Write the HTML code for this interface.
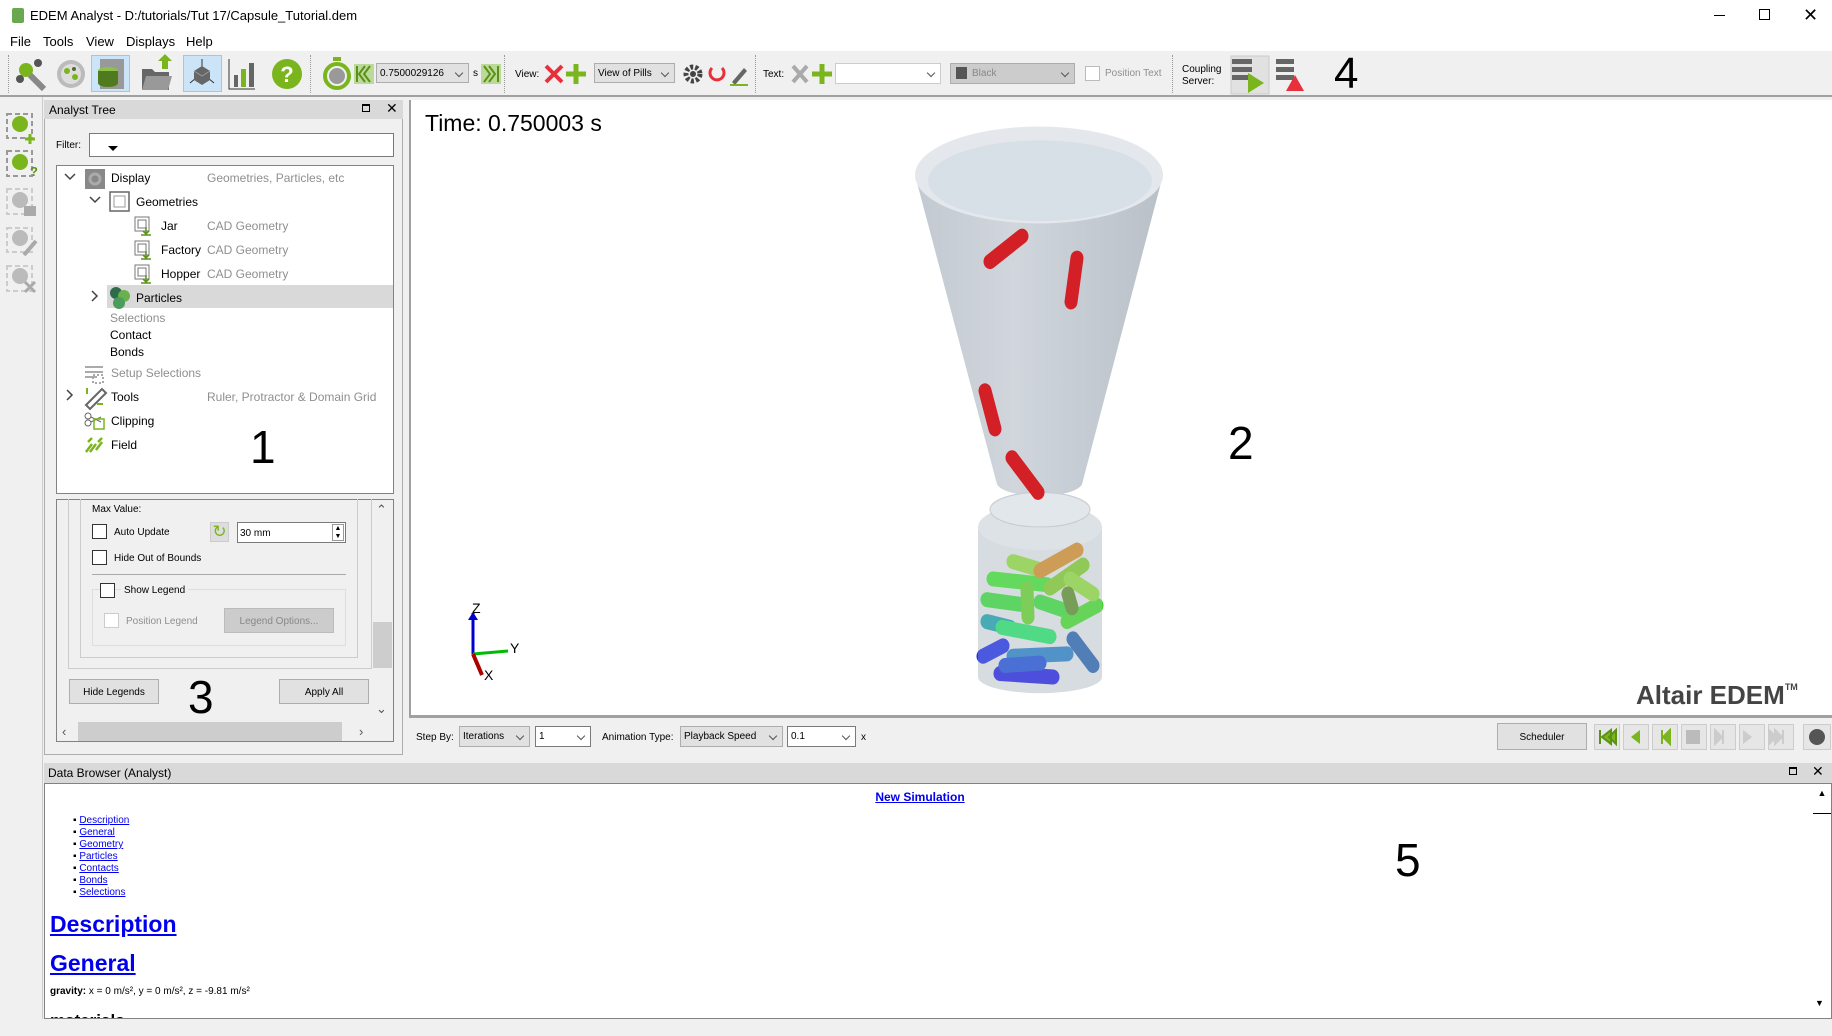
<!DOCTYPE html>
<html><head><meta charset="utf-8"><style>
*{box-sizing:border-box;margin:0;padding:0}
body{width:1832px;height:1036px;overflow:hidden;background:#f0f0f0;font-family:"Liberation Sans",sans-serif;font-size:12px;color:#000;position:relative}
.a{position:absolute}
.t{position:absolute;white-space:nowrap;line-height:1}
.g{color:#8f8f8f}
.cb{position:absolute;width:15px;height:15px;border:1px solid #333;background:#fff}
.btn{position:absolute;border:1px solid #adadad;background:#e1e1e1;text-align:center;font-size:11px}
.combo{position:absolute;border:1px solid #adadad;background:#e1e1e1;font-size:10px;padding:4px 3px;white-space:nowrap}
.combo.w{background:#fff;border-color:#7a7a7a}
.combo:after{content:"";position:absolute;right:6px;top:6px;width:5px;height:5px;border-right:1px solid #555;border-bottom:1px solid #555;transform:rotate(45deg)}
.sep{position:absolute;top:55px;height:38px;border-left:1px dotted #999}
.pb{position:absolute;top:724px;width:26px;height:26px;border:1px solid #ccc;background:#e6e6e6}
a{color:#00e;text-decoration:underline}
</style></head><body>
<div class="a" style="left:0;top:0;width:1832px;height:32px;background:#fff"></div>
<div class="a" style="left:12px;top:8px;width:12px;height:15px;background:#6aa84f;border-radius:2px"></div>
<div class="t" style="left:30px;top:9px;font-size:13px">EDEM Analyst - D:/tutorials/Tut 17/Capsule_Tutorial.dem</div>
<div class="a" style="left:1714px;top:15px;width:11px;height:1px;background:#000"></div>
<div class="a" style="left:1759px;top:9px;width:11px;height:11px;border:1px solid #000"></div>
<div class="t" style="left:1803px;top:6px;font-size:18px">✕</div>
<div class="a" style="left:0;top:32px;width:1832px;height:19px;background:#fff"></div>
<div class="t" style="left:10px;top:35px;font-size:13px">File</div>
<div class="t" style="left:43px;top:35px;font-size:13px">Tools</div>
<div class="t" style="left:86px;top:35px;font-size:13px">View</div>
<div class="t" style="left:126px;top:35px;font-size:13px">Displays</div>
<div class="t" style="left:186px;top:35px;font-size:13px">Help</div>
<div class="a" style="left:0;top:51px;width:1832px;height:46px;background:#f0f0f0;border-bottom:2px solid #a0a0a0"></div>
<div class="a" style="left:91px;top:55px;width:39px;height:37px;background:#cce4f7;border:1px solid #99c9ef"></div>
<div class="a" style="left:183px;top:55px;width:39px;height:37px;background:#cce4f7;border:1px solid #99c9ef"></div>
<svg class="a" style="left:0;top:51px" width="1832" height="46">
<circle cx="26" cy="19" r="7" fill="#7ab51d"/><circle cx="38" cy="12" r="4" fill="#555"/><circle cx="20" cy="28" r="4" fill="#555"/><path d="M30 24 L44 38" stroke="#888" stroke-width="6"/>
<circle cx="71" cy="23" r="14" fill="#bbb"/><circle cx="71" cy="23" r="10" fill="#ddd"/><circle cx="67" cy="20" r="3" fill="#7ab51d"/><circle cx="75" cy="26" r="3" fill="#7ab51d"/><circle cx="74" cy="18" r="2" fill="#556b2f"/>
<rect x="100" y="8" width="24" height="30" fill="#999"/><ellipse cx="108" cy="20" rx="10" ry="4" fill="#8bc34a"/><rect x="98" y="20" width="20" height="12" fill="#4f7a1e"/><ellipse cx="108" cy="32" rx="10" ry="4" fill="#4f7a1e"/>
<path d="M142 18 h10 l3 3 h14 v18 h-27z" fill="#666"/><path d="M146 25 h26 l-4 14 h-26z" fill="#999"/><path d="M162 18 v-8 h-4 l7-7 7 7 h-4 v8z" fill="#7ab51d"/>
<path d="M202 8 v14 M202 22 l-12 10 M202 22 l12 10" stroke="#333"/><path d="M194 20 l8-5 8 5 v9 l-8 5 -8-5z" fill="#666"/><path d="M194 20 l8 5 8-5" stroke="#999" fill="none"/>
<path d="M229 8 v30 h26" stroke="#333" fill="none"/><rect x="234" y="24" width="4" height="12" fill="#666"/><rect x="241" y="18" width="5" height="18" fill="#7ab51d"/><rect x="249" y="12" width="5" height="24" fill="#666"/>
<circle cx="287" cy="23" r="15" fill="#7ab51d"/><text x="287" y="31" font-size="22" font-weight="bold" fill="#fff" text-anchor="middle" font-family="Liberation Sans">?</text>
<circle cx="337" cy="25" r="12" fill="none" stroke="#7ab51d" stroke-width="4"/><circle cx="337" cy="25" r="8" fill="#999"/><rect x="333" y="6" width="8" height="4" fill="#7ab51d"/>
<rect x="354" y="13" width="20" height="20" fill="#bcd99a"/><path d="M357 15 v16 M370 15 l-6 8 6 8 M365 15 l-6 8 6 8" stroke="#5a9216" stroke-width="2" fill="none"/>
<rect x="481" y="13" width="20" height="20" fill="#bcd99a"/><path d="M498 15 v16 M484 15 l6 8 -6 8 M489 15 l6 8 -6 8" stroke="#5a9216" stroke-width="2" fill="none"/>
<path d="M546 15 l16 16 M562 15 l-16 16" stroke="#e8303c" stroke-width="4"/>
<path d="M576 13 v20 M566 23 h20" stroke="#7ab51d" stroke-width="5"/>
<circle cx="693" cy="23" r="7" fill="none" stroke="#444" stroke-width="5" stroke-dasharray="3 2"/><circle cx="693" cy="23" r="3" fill="#444"/>
<path d="M722 17 a7 7 0 1 1 -10 0" stroke="#e8303c" stroke-width="3" fill="none"/>
<path d="M732 31 l12-14 3 3 -12 14z" fill="#666"/><path d="M730 34 h18" stroke="#7ab51d" stroke-width="2"/>
<path d="M793 15 l14 16 M807 15 l-14 16" stroke="#aaa" stroke-width="4"/>
<path d="M822 13 v20 M812 23 h20" stroke="#7ab51d" stroke-width="5"/>
<rect x="1231" y="5" width="38" height="38" fill="#e1e1e1" stroke="#ccc"/>
<rect x="1232" y="8" width="20" height="5" fill="#666"/><rect x="1232" y="16" width="20" height="5" fill="#666"/><rect x="1232" y="24" width="20" height="5" fill="#666"/><path d="M1248 22 l16 10 -16 10z" fill="#7ab51d"/>
<rect x="1276" y="8" width="18" height="5" fill="#666"/><rect x="1276" y="16" width="18" height="5" fill="#666"/><rect x="1276" y="24" width="18" height="5" fill="#666"/><path d="M1295 24 l9 16 h-18z" fill="#e8303c"/>
</svg>
<div class="sep" style="left:310px"></div><div class="sep" style="left:504px"></div><div class="sep" style="left:755px"></div><div class="sep" style="left:1172px"></div>
<div class="sep" style="left:8px"></div>
<div class="combo" style="left:376px;top:63px;width:93px;height:20px">0.7500029126</div>
<div class="t" style="left:473px;top:69px;font-size:10px">s</div>
<div class="t" style="left:515px;top:70px;font-size:10px">View:</div>
<div class="combo" style="left:594px;top:63px;width:81px;height:20px">View of Pills</div>
<div class="t" style="left:763px;top:70px;font-size:10px">Text:</div>
<div class="combo w" style="left:835px;top:63px;width:106px;height:21px;border-color:#ccc"></div>
<div class="combo" style="left:950px;top:63px;width:125px;height:21px;color:#888;background:#ccc;padding-left:21px">Black</div>
<div class="a" style="left:956px;top:67px;width:11px;height:12px;background:#555"></div>
<div class="a" style="left:1085px;top:66px;width:15px;height:15px;border:1px solid #bbb;background:#fff"></div>
<div class="t g" style="left:1105px;top:69px;font-size:10px">Position Text</div>
<div class="t" style="left:1182px;top:64px;font-size:10px;line-height:12px">Coupling<br>Server:</div>
<div class="t" style="left:1334px;top:52px;font-size:44px">4</div>
<div class="a" style="left:0;top:97px;width:43px;height:922px;background:#f0f0f0;border-right:1px solid #ccc"></div>
<svg class="a" style="left:0;top:100px" width="43" height="200">
<g fill="none" stroke="#999" stroke-width="2" stroke-dasharray="5 3"><rect x="7" y="14" width="25" height="24"/><rect x="7" y="51" width="25" height="25"/><rect x="7" y="89" width="25" height="25" stroke="#ccc"/><rect x="7" y="128" width="25" height="24" stroke="#ccc"/><rect x="7" y="166" width="25" height="25" stroke="#ccc"/></g>
<circle cx="20" cy="24" r="8" fill="#7ab51d"/><path d="M30 34 v10 M25 39 h10" stroke="#7ab51d" stroke-width="3"/>
<circle cx="20" cy="62" r="8" fill="#7ab51d"/><text x="30" y="76" font-size="13" font-weight="bold" fill="#5a9216">?</text>
<circle cx="20" cy="100" r="8" fill="#bbb"/><rect x="24" y="106" width="12" height="10" fill="#aaa"/>
<circle cx="20" cy="138" r="8" fill="#bbb"/><path d="M24 155 l12-14" stroke="#aaa" stroke-width="4"/>
<circle cx="20" cy="176" r="8" fill="#bbb"/><path d="M25 182 l10 10 M35 182 l-10 10" stroke="#aaa" stroke-width="3"/>
</svg>
<div class="a" style="left:44px;top:100px;width:359px;height:19px;background:#d9d9d9"></div>
<div class="t" style="left:49px;top:104px;font-size:12px">Analyst Tree</div>
<div class="a" style="left:362px;top:104px;width:8px;height:8px;border:1px solid #000;border-top-width:2px"></div>
<div class="t" style="left:386px;top:101px;font-size:14px">✕</div>
<div class="a" style="left:44px;top:119px;width:359px;height:636px;border:1px solid #adadad;border-top:none"></div>
<div class="t" style="left:56px;top:141px;font-size:10px">Filter:</div>
<div class="a" style="left:89px;top:133px;width:305px;height:24px;background:#fff;border:1px solid #7a7a7a"></div>
<div class="a" style="left:108px;top:146px;width:0;height:0;border:5px solid transparent;border-top:5px solid #000"></div>
<div class="a" style="left:56px;top:165px;width:338px;height:329px;background:#fff;border:1px solid #828282"></div>
<div class="a" style="left:107px;top:285px;width:286px;height:23px;background:#d9d9d9"></div>
<svg class="a" style="left:56px;top:165px" width="338" height="329">
<path d="M9 9 l5 5 5-5 M34 32 l5 5 5-5 M36 126 l5 5 -5 5 M11 225 l5 5 -5 5" stroke="#444" stroke-width="1.5" fill="none"/>
<rect x="29" y="4" width="20" height="20" fill="#888"/><circle cx="39" cy="14" r="5" fill="none" stroke="#aaa" stroke-width="3"/>
<rect x="54" y="27" width="19" height="19" fill="none" stroke="#666" stroke-width="1.5"/><rect x="58" y="31" width="11" height="11" fill="none" stroke="#999"/>
<g fill="none" stroke="#777"><rect x="79" y="52" width="14" height="14"/><rect x="82" y="55" width="8" height="8"/><rect x="79" y="76" width="14" height="14"/><rect x="82" y="79" width="8" height="8"/><rect x="79" y="100" width="14" height="14"/><rect x="82" y="103" width="8" height="8"/></g>
<path d="M90 62 v6 M87 66 l3 3 3-3 M85 70 h10 M90 86 v6 M87 90 l3 3 3-3 M85 94 h10 M90 110 v6 M87 114 l3 3 3-3 M85 118 h10" stroke="#5a9216" stroke-width="1.5" fill="none"/>
<circle cx="60" cy="128" r="6" fill="#2e6b4a"/><circle cx="68" cy="131" r="6" fill="#6ab04c"/><circle cx="63" cy="138" r="6" fill="#4c9c5e"/>
<g stroke="#aaa" stroke-width="2"><path d="M29 202 h18 M29 207 h18 M29 212 h12"/><rect x="37" y="210" width="10" height="8" fill="none" stroke-dasharray="2 2"/></g>
<path d="M30 240 l16-16 4 4 -16 16z" fill="none" stroke="#666" stroke-width="2"/><path d="M31 223 v6 M47 239 h-6" stroke="#7ab51d" stroke-width="2"/>
<circle cx="32" cy="251" r="3" fill="none" stroke="#666"/><circle cx="32" cy="258" r="3" fill="none" stroke="#666"/><path d="M35 252 l10 5 M35 257 l10-5" stroke="#666"/><rect x="38" y="254" width="10" height="10" fill="none" stroke="#7ab51d" stroke-width="1.5"/>
<path d="M30 287 l6-8 M34 287 l6-8 M40 285 l6-8 M32 277 l4-4 M42 277 l4-4" stroke="#7ab51d" stroke-width="2.5"/>
</svg>
<div class="t" style="left:111px;top:172px;font-size:12px">Display</div><div class="t g" style="left:207px;top:172px;font-size:12px">Geometries, Particles, etc</div>
<div class="t" style="left:136px;top:196px;font-size:12px">Geometries</div>
<div class="t" style="left:161px;top:220px;font-size:12px">Jar</div><div class="t g" style="left:207px;top:220px;font-size:12px">CAD Geometry</div>
<div class="t" style="left:161px;top:244px;font-size:12px">Factory</div><div class="t g" style="left:207px;top:244px;font-size:12px">CAD Geometry</div>
<div class="t" style="left:161px;top:268px;font-size:12px">Hopper</div><div class="t g" style="left:207px;top:268px;font-size:12px">CAD Geometry</div>
<div class="t" style="left:136px;top:292px;font-size:12px">Particles</div>
<div class="t g" style="left:110px;top:312px;font-size:12px">Selections</div>
<div class="t" style="left:110px;top:329px;font-size:12px">Contact</div>
<div class="t" style="left:110px;top:346px;font-size:12px">Bonds</div>
<div class="t g" style="left:111px;top:367px;font-size:12px">Setup Selections</div>
<div class="t" style="left:111px;top:391px;font-size:12px">Tools</div><div class="t g" style="left:207px;top:391px;font-size:12px">Ruler, Protractor &amp; Domain Grid</div>
<div class="t" style="left:111px;top:415px;font-size:12px">Clipping</div>
<div class="t" style="left:111px;top:439px;font-size:12px">Field</div>
<div class="t" style="left:250px;top:424px;font-size:46px">1</div>
<div class="a" style="left:56px;top:499px;width:338px;height:243px;border:1px solid #828282"></div>
<div class="a" style="left:68px;top:499px;width:304px;height:170px;border:1px solid #ccc;border-top:none"></div>
<div class="a" style="left:80px;top:499px;width:278px;height:159px;border:1px solid #ccc;border-top:none"></div>
<div class="a" style="left:373px;top:500px;width:20px;height:221px;background:#f0f0f0"></div>
<div class="a" style="left:373px;top:622px;width:19px;height:46px;background:#cdcdcd"></div>
<div class="t" style="left:376px;top:503px;font-size:13px;color:#555">⌃</div>
<div class="t" style="left:376px;top:702px;font-size:13px;color:#555">⌄</div>
<div class="a" style="left:57px;top:721px;width:336px;height:20px;background:#f0f0f0"></div>
<div class="a" style="left:78px;top:722px;width:264px;height:19px;background:#cdcdcd"></div>
<div class="t" style="left:62px;top:725px;font-size:13px;color:#555">‹</div>
<div class="t" style="left:359px;top:725px;font-size:13px;color:#555">›</div>
<div class="t" style="left:92px;top:505px;font-size:10px">Max Value:</div>
<div class="cb" style="left:92px;top:524px"></div><div class="t" style="left:114px;top:528px;font-size:10px">Auto Update</div>
<div class="a" style="left:210px;top:522px;width:19px;height:20px;background:#ddd;border:1px solid #ccc;color:#7ab51d;font-size:17px;line-height:17px;text-align:center">↻</div>
<div class="a" style="left:237px;top:522px;width:109px;height:21px;background:#fff;border:1px solid #7a7a7a;font-size:10px;padding:5px 2px">30 mm</div>
<div class="a" style="left:332px;top:524px;width:12px;height:17px;border:1px solid #999;font-size:7px;line-height:8px;text-align:center">▲<br>▼</div>
<div class="cb" style="left:92px;top:550px"></div><div class="t" style="left:114px;top:554px;font-size:10px">Hide Out of Bounds</div>
<div class="a" style="left:92px;top:574px;width:254px;height:1px;background:#aaa"></div>
<div class="a" style="left:92px;top:589px;width:254px;height:57px;border:1px solid #ddd"></div>
<div class="cb" style="left:100px;top:583px"></div><div class="t" style="left:121px;top:586px;font-size:10px;background:#f0f0f0;padding:0 3px">Show Legend</div>
<div class="a" style="left:104px;top:613px;width:15px;height:15px;border:1px solid #ccc;background:#fff"></div><div class="t g" style="left:126px;top:617px;font-size:10px">Position Legend</div>
<div class="btn" style="left:224px;top:608px;width:110px;height:25px;background:#ccc;border-color:#bbb;color:#888;padding-top:7px;font-size:10px">Legend Options...</div>
<div class="btn" style="left:69px;top:679px;width:90px;height:25px;padding-top:7px;font-size:10px">Hide Legends</div>
<div class="btn" style="left:279px;top:679px;width:90px;height:25px;padding-top:7px;font-size:10px">Apply All</div>
<div class="t" style="left:188px;top:674px;font-size:46px">3</div>
<div class="a" style="left:409px;top:100px;width:1423px;height:618px;background:#fff;border-left:2px solid #a0a0a0;border-bottom:3px solid #a0a0a0"></div>
<div class="t" style="left:425px;top:112px;font-size:23px">Time: 0.750003 s</div>
<div class="t" style="left:1228px;top:420px;font-size:46px">2</div>
<div class="t" style="left:1636px;top:682px;font-size:26px;font-weight:bold;color:#444">Altair EDEM<sup style="font-size:9px;vertical-align:14px">TM</sup></div>
<svg class="a" style="left:0;top:0" width="1832" height="1036">
<defs><linearGradient id="cg" x1="0" x2="1"><stop offset="0" stop-color="#c3c9d0"/><stop offset=".4" stop-color="#d0d6dc"/><stop offset="1" stop-color="#b9c0c8"/></linearGradient></defs>
<g transform="matrix(1 0 0 1.154 0 -15.4)">
<path d="M915 165 L997 433 A43 12 0 0 0 1082 433 L1163 165 Z" fill="url(#cg)"/>
<ellipse cx="1039" cy="165" rx="124" ry="42" fill="#e4e8ec"/>
<ellipse cx="1040" cy="170" rx="112" ry="35" fill="#d8e0e7"/>
<path d="M978 470 V600 A62 14 0 0 0 1102 600 V470 Z" fill="#d5dade"/>
<ellipse cx="1040" cy="470" rx="62" ry="20" fill="#dde2e7"/>
<ellipse cx="1040" cy="455" rx="50" ry="15" fill="#e2e7eb" stroke="#c6ccd2"/>
<g stroke-linecap="round" stroke-width="13" fill="none">
<path d="M990 240 L1022 218" stroke="#d32027"/><path d="M1077 237 L1071 275" stroke="#d32027"/>
<path d="M985 352 L995 385" stroke="#d32027"/><path d="M1012 410 L1038 440" stroke="#d32027"/>
</g>
<g stroke-linecap="round" stroke-width="13" fill="none">
<path d="M1000 597 L1053 600" stroke="#2424d8"/><path d="M983 582 L1003 573" stroke="#2233dd"/>
<path d="M1013 582 L1067 580" stroke="#2a7cc0"/><path d="M1073 567 L1093 590" stroke="#2a62a8"/>
<path d="M1005 590 L1040 588" stroke="#2050d0"/>
<path d="M987 552 L1010 557" stroke="#1e9aa6"/><path d="M1002 557 L1050 565" stroke="#2ad86a"/>
<path d="M987 533 L1020 537" stroke="#3ad040"/><path d="M1040 535 L1067 543" stroke="#3ad040"/>
<path d="M1067 552 L1097 538" stroke="#44d030"/><path d="M993 515 L1047 520" stroke="#40d838"/>
<path d="M1027 523 L1028 548" stroke="#60c830"/><path d="M1050 523 L1083 503" stroke="#7ac230"/>
<path d="M1070 515 L1093 528" stroke="#8ad040"/><path d="M1013 500 L1040 507" stroke="#8ad040"/>
<path d="M1040 508 L1077 490" stroke="#c88a30"/><path d="M1068 528 L1072 540" stroke="#5a8a30"/>
</g>
<path d="M978 470 V600 A62 14 0 0 0 1102 600 V470 Z" fill="#dfe4e9" opacity=".22"/>
</g>
<path d="M473 654 V613" stroke="#0000cc" stroke-width="3"/><path d="M468 620 l5-8 5 8z" fill="#0000cc"/>
<path d="M473 654 L508 651" stroke="#00bb00" stroke-width="3"/><path d="M473 654 L482 675" stroke="#aa0000" stroke-width="4"/>
<text x="472" y="613" font-size="14" font-family="Liberation Sans">Z</text><text x="510" y="653" font-size="14" font-family="Liberation Sans">Y</text><text x="484" y="680" font-size="14" font-family="Liberation Sans">X</text>
</svg>
<div class="t" style="left:416px;top:733px;font-size:10px">Step By:</div>
<div class="combo" style="left:459px;top:726px;width:71px;height:21px">Iterations</div>
<div class="combo w" style="left:535px;top:726px;width:56px;height:21px">1</div>
<div class="t" style="left:602px;top:733px;font-size:10px">Animation Type:</div>
<div class="combo" style="left:680px;top:726px;width:103px;height:21px">Playback Speed</div>
<div class="combo w" style="left:787px;top:726px;width:69px;height:21px">0.1</div>
<div class="t" style="left:861px;top:733px;font-size:10px">x</div>
<div class="btn" style="left:1497px;top:723px;width:90px;height:27px;padding-top:8px;font-size:10px">Scheduler</div>
<div class="pb" style="left:1594px"></div><div class="pb" style="left:1623px"></div><div class="pb" style="left:1652px"></div><div class="pb" style="left:1681px"></div><div class="pb" style="left:1710px"></div><div class="pb" style="left:1739px"></div><div class="pb" style="left:1768px"></div><div class="pb" style="left:1803px;width:28px"></div>
<svg class="a" style="left:1594px;top:724px" width="238" height="26">
<path d="M6 6 v14 M17 6 l-9 7 9 7z M22 6 l-7 7 7 7z" stroke="#5a9216" fill="#7ab51d" stroke-width="2"/>
<path d="M46 6 l-9 7 9 7z" fill="#7ab51d"/>
<path d="M68 6 v14 M76 6 l-7 7 7 7z" stroke="#7ab51d" fill="#7ab51d" stroke-width="2"/>
<rect x="92" y="6" width="14" height="14" fill="#bbb"/>
<path d="M121 6 l7 7 -7 7z M129 6 v14" stroke="#ccc" fill="#ccc" stroke-width="2"/>
<path d="M149 6 l9 7 -9 7z" fill="#ccc"/>
<path d="M175 6 l7 7 -7 7z M181 6 l7 7 -7 7z M189 6 v14" stroke="#ccc" fill="#ccc" stroke-width="2"/>
<circle cx="223" cy="13" r="8" fill="#555"/>
</svg>
<div class="a" style="left:44px;top:763px;width:1788px;height:20px;background:#d9d9d9"></div>
<div class="t" style="left:48px;top:767px;font-size:12px">Data Browser (Analyst)</div>
<div class="a" style="left:1789px;top:767px;width:8px;height:8px;border:1px solid #000;border-top-width:2px"></div>
<div class="t" style="left:1812px;top:764px;font-size:14px">✕</div>
<div class="a" style="left:44px;top:783px;width:1788px;height:236px;background:#fff;border:1px solid #828282;overflow:hidden">
<div class="t" style="left:0;width:1750px;text-align:center;top:7px;font-size:12px;font-weight:bold"><a>New Simulation</a></div>
<div class="a" style="left:1768px;top:4px;width:18px;height:26px;border-bottom:1px solid #000;font-size:9px;text-align:center">▲</div>
<div class="t" style="left:1770px;top:215px;font-size:9px">▼</div>
<div style="position:absolute;left:28px;top:31px;font-size:10px;line-height:12px">
<div>▪ <a>Description</a></div><div>▪ <a>General</a></div><div>▪ <a>Geometry</a></div><div>▪ <a>Particles</a></div><div>▪ <a>Contacts</a></div><div>▪ <a>Bonds</a></div><div>▪ <a>Selections</a></div></div>
<div class="t" style="left:5px;top:129px;font-size:23px;font-weight:bold"><a>Description</a></div>
<div class="t" style="left:5px;top:168px;font-size:23px;font-weight:bold"><a>General</a></div>
<div class="t" style="left:5px;top:203px;font-size:10px"><b>gravity:</b> x = 0 m/s², y = 0 m/s², z = -9.81 m/s²</div>
<div class="t" style="left:5px;top:228px;font-size:17px;font-weight:bold">materials</div>
<div class="t" style="left:1350px;top:53px;font-size:46px">5</div>
</div>
</body></html>
